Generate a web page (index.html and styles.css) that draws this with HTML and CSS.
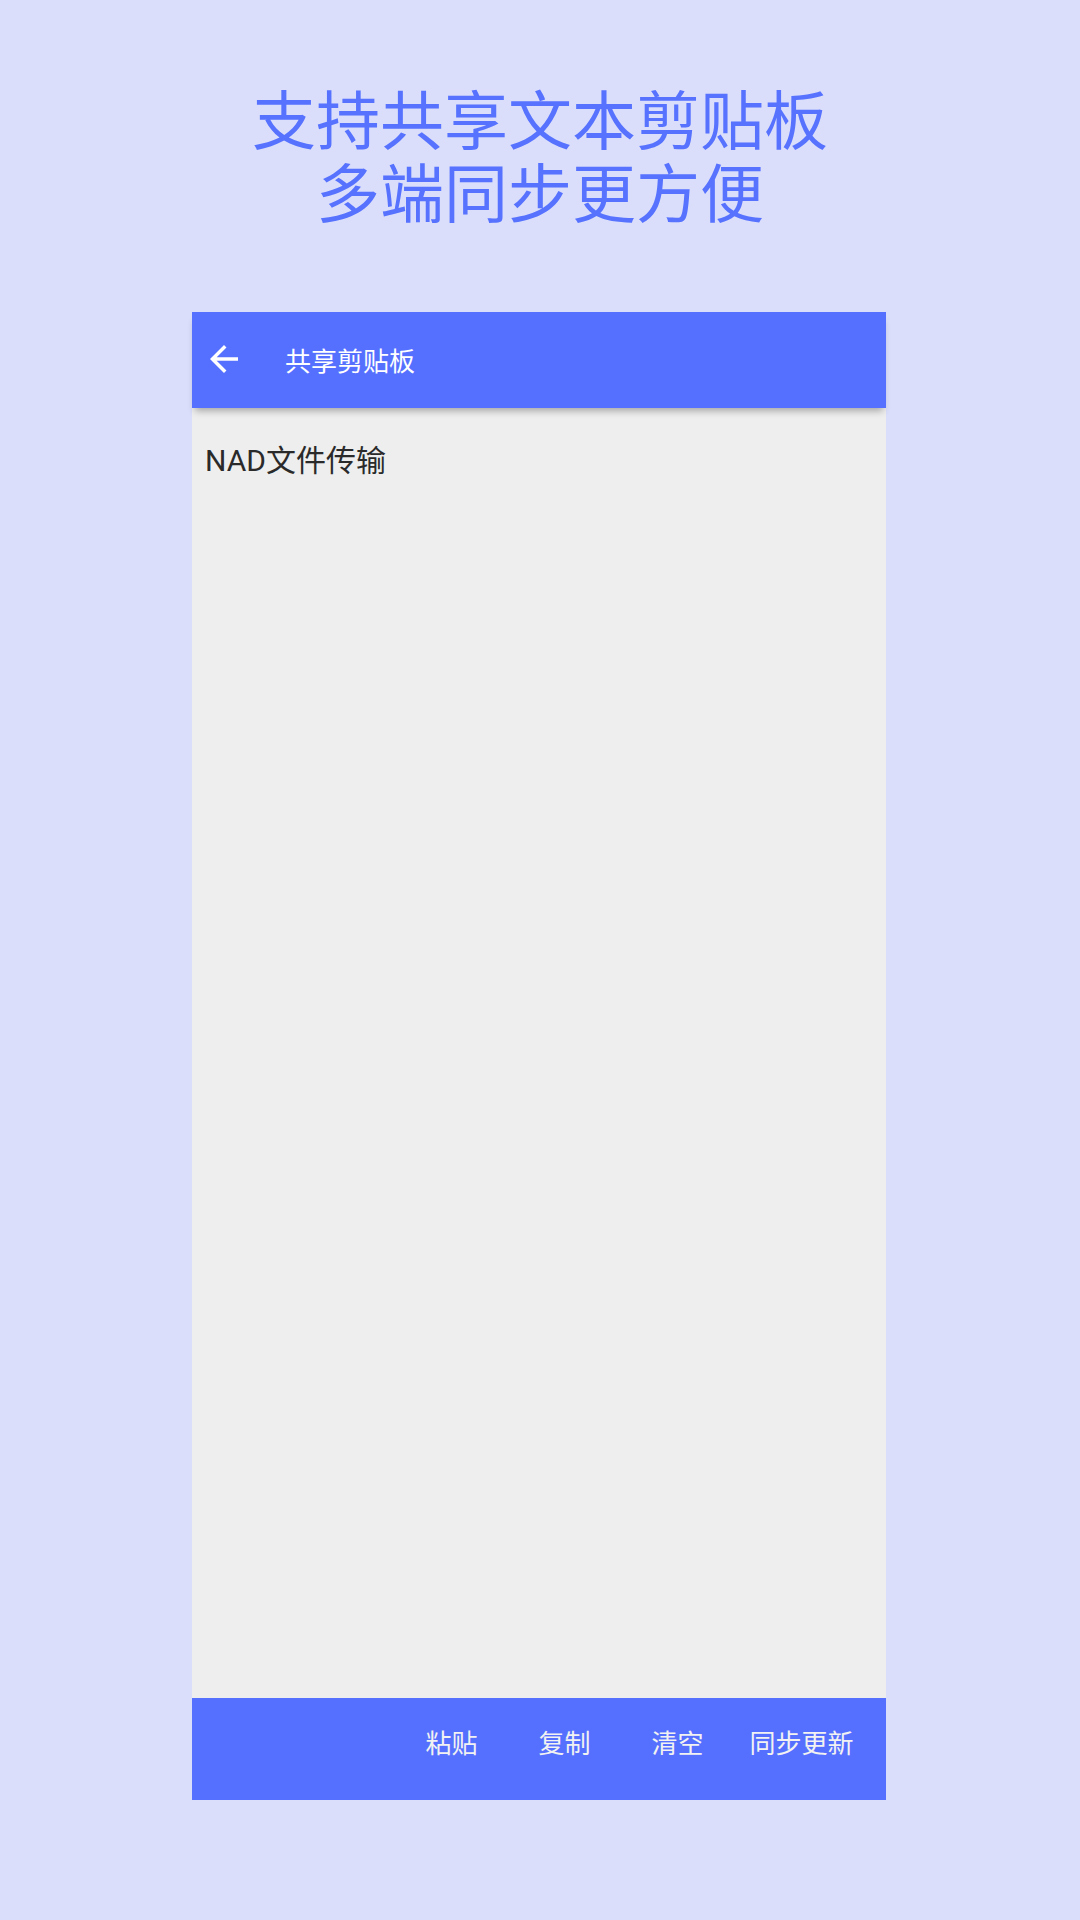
FILE: index.html
```html
<!DOCTYPE html>
<html lang="zh-CN">
<head>
<meta charset="utf-8">
<title>共享剪贴板</title>
<link rel="stylesheet" href="styles.css">
</head>
<body>
<div class="page">
  <header class="headline">
    <div class="headline-line">支持共享文本剪贴板</div>
    <div class="headline-line">多端同步更方便</div>
  </header>
  <div class="phone">
    <div class="appbar">
      <svg class="back-icon" viewBox="0 0 24 24" aria-hidden="true">
        <path d="M20 11H7.83l5.59-5.59L12 4l-8 8 8 8 1.41-1.41L7.83 13H20v-2z" fill="#ffffff"/>
      </svg>
      <div class="appbar-title">共享剪贴板</div>
    </div>
    <div class="content">
      <div class="clip-text">NAD文件传输</div>
    </div>
    <div class="bottombar">
      <div class="btn">粘贴</div>
      <div class="btn">复制</div>
      <div class="btn">清空</div>
      <div class="btn btn-wide">同步更新</div>
    </div>
  </div>
</div>
</body>
</html>
```

FILE: styles.css
```css
html, body {
  margin: 0;
  padding: 0;
}

body {
  background: #dadefb;
  font-family: Roboto, "Noto Sans CJK SC", sans-serif;
  width: 1080px;
  height: 1920px;
  overflow: hidden;
}

.page {
  display: flex;
  flex-direction: column;
  align-items: center;
}

.headline {
  padding-top: 80px;
  margin-bottom: 86px;
  text-align: center;
  color: #5672ff;
  font-family: "Noto Sans CJK SC", sans-serif;
  font-size: 64px;
  line-height: 73px;
  letter-spacing: 0;
}

.headline-line {
  height: 73px;
}

.phone {
  width: 694px;
  height: 1488px;
  display: flex;
  flex-direction: column;
  margin-left: -2px;
}

.appbar {
  position: relative;
  z-index: 2;
  height: 96px;
  flex: 0 0 96px;
  background: #5570ff;
  display: flex;
  align-items: center;
  box-shadow: 0 6px 7px -3px rgba(0, 0, 0, 0.3);
}

.back-icon {
  width: 42px;
  height: 42px;
  margin-left: 11px;
  margin-top: -2px;
}

.appbar-title {
  margin-left: 40px;
  color: #ffffff;
  font-family: "Noto Sans CJK SC", sans-serif;
  font-size: 26px;
  line-height: 32px;
}

.content {
  flex: 1 1 auto;
  background: #eeeeee;
  padding: 33px 13px 0;
}

.clip-text {
  color: #2a2a2a;
  font-size: 30px;
  line-height: 40px;
}

.bottombar {
  height: 102px;
  flex: 0 0 102px;
  background: #5570ff;
  display: flex;
  justify-content: flex-end;
  align-items: flex-start;
  padding-right: 17px;
  box-sizing: border-box;
}

.btn {
  width: 113px;
  height: 88px;
  line-height: 88px;
  text-align: center;
  color: #f2f2f2;
  font-family: "Noto Sans CJK SC", sans-serif;
  font-size: 26px;
}

.btn-wide {
  width: 135px;
}
```
